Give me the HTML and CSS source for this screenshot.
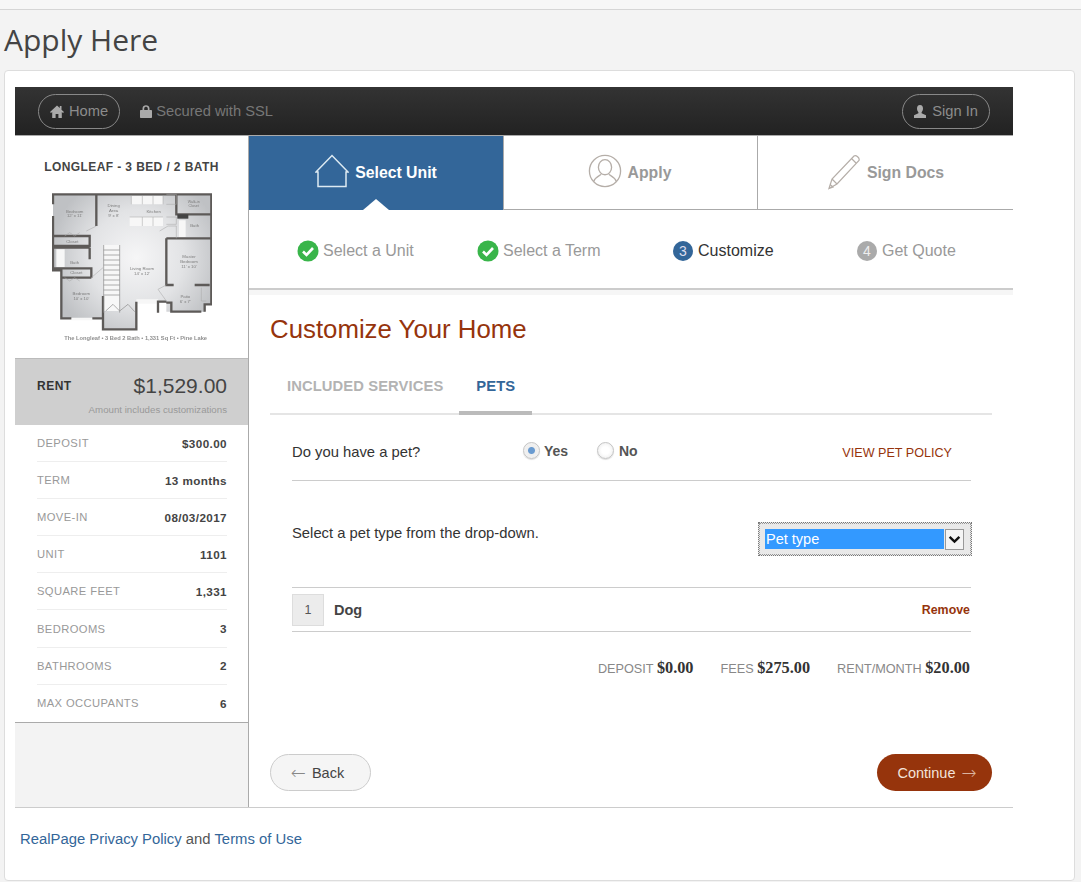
FILE: index.html
```html
<!DOCTYPE html>
<html lang="en">
<head>
<meta charset="utf-8">
<title>Apply Here</title>
<link rel="stylesheet" href="styles.css">
</head>
<body>
<div class="topstrip"></div>
<h1 class="page-title">Apply Here</h1>
<div class="card">
  <div class="app">
    <header class="topbar">
      <a class="pill">
        <svg class="ico-home" viewBox="0 0 14 13"><path d="M7 0.5 L0 7 L1 8 L2.2 7 V13 H5.6 V9 H8.4 V13 H11.8 V7 L13 8 L14 7 L11.5 4.7 V1 H9.8 V3.1 Z"/></svg>
        Home
      </a>
      <span class="ssl">
        <svg class="ico-lock" viewBox="0 0 12 13"><path d="M2.5 5 V3.5 C2.5 -0.8 9.5 -0.8 9.5 3.5 V5 H11 C11.6 5 12 5.4 12 6 V12 C12 12.6 11.6 13 11 13 H1 C0.4 13 0 12.6 0 12 V6 C0 5.4 0.4 5 1 5 Z M4.2 5 H7.8 V3.5 C7.8 1.2 4.2 1.2 4.2 3.5 Z" fill-rule="evenodd"/></svg>
        Secured with SSL
      </span>
      <a class="pill signin">
        <svg class="ico-user" viewBox="0 0 12 13"><path d="M6 0 C8.2 0 9 1.7 9 3.6 C9 5.3 8.2 6.6 7.6 7.2 V8.3 L12 10.2 V13 H0 V10.2 L4.4 8.3 V7.2 C3.8 6.6 3 5.3 3 3.6 C3 1.7 3.8 0 6 0 Z"/></svg>
        Sign In
      </a>
    </header>
    <div class="columns">
      <aside class="side">
        <h2 class="plan-title">LONGLEAF - 3 BED / 2 BATH</h2>
        <svg class="plan" viewBox="97 36 480 474">
          <defs>
            <radialGradient id="floor" gradientUnits="userSpaceOnUse" cx="350" cy="230" r="260"><stop offset="0" stop-color="#f6f6f7"/><stop offset="0.55" stop-color="#e2e3e5"/><stop offset="1" stop-color="#bfc1c4"/></radialGradient>
          </defs>
          <path class="floor" d="M100 40 H575 V370 H555 V392 H440 V365 H350 V445 H250 V412 H125 V268 H100 Z"/>
          <path class="white" d="M335 45 H430 V70 H335 Z M330 108 H430 V135 H330 Z M252 192 H300 V390 H252 Z M110 205 H135 V258 H110 Z M478 118 H498 V168 H478 Z M350 355 H415 V368 H350 Z M155 410 H218 V418 H155 Z"/>
          <path class="wall" d="M100 70 V40 H575 V370 H555 V392 M545 392 H455 V365 H440 M415 395 V362 H440 M350 362 V445 H250 V412 H218 M155 412 H125 V268 H100 V105 M230 40 V135 M100 165 H210 V195 H100 M210 200 V235 M100 200 H210 M100 262 H215 V290 M125 290 H215 M250 345 V412 M470 40 V100 H575 M440 172 H575 M440 172 V312 H462 M525 312 H570"/>
          <path class="stair" d="M252 192 V395 M300 192 V395 M252 207 H300 M252 222 H300 M252 237 H300 M252 252 H300 M252 267 H300 M252 282 H300 M252 297 H300 M252 312 H300 M252 327 H300 M252 342 H300 M258 390 L280 370 L300 390 L325 370 L345 392"/>
          <path class="thin" d="M230 135 L200 150 M335 45 V70 M368 45 V70 M400 45 V70 M430 45 V70 M330 108 H430 M368 108 V135 M400 108 V135 M440 40 H470 V70 H440 M440 108 H470 V130 H440 M420 150 L445 135 H470 V172 M135 165 L150 155 L165 165 L180 155 M135 290 L150 300 L165 290 L180 300 M215 290 L250 260 M440 312 L415 325 L440 360 M545 320 V360 H560"/>
          <rect class="wall-fill" x="473" y="100" width="33" height="13"/>
          <text class="room" x="165" y="95">Bedroom</text><text class="room" x="165" y="108">12' x 11'</text>
          <text class="room" x="282" y="78">Dining</text><text class="room" x="282" y="93">Area</text><text class="room" x="282" y="107">9' x 8'</text>
          <text class="room" x="402" y="95">Kitchen</text>
          <text class="room small" x="522" y="65">Walk-in</text><text class="room small" x="522" y="78">Closet</text>
          <text class="room" x="525" y="138">Bath</text>
          <text class="room" x="158" y="187">Closet</text>
          <text class="room" x="165" y="248">Bath</text>
          <text class="room" x="170" y="280">Closet</text>
          <text class="room" x="185" y="343">Bedroom</text><text class="room" x="185" y="356">10' x 10'</text>
          <text class="room" x="367" y="268">Living Room</text><text class="room" x="367" y="282">14' x 12'</text>
          <text class="room" x="508" y="232">Master</text><text class="room" x="508" y="247">Bedroom</text><text class="room" x="508" y="261">11' x 10'</text>
          <text class="room" x="497" y="352">Patio</text><text class="room" x="497" y="366">6' x 7'</text>
          <text class="caption" x="348" y="477">The Longleaf • 3 Bed 2 Bath • 1,331 Sq Ft • Pine Lake</text>
        </svg>
        <div class="rent">
          <div class="rent-line"><span class="rent-label">RENT</span><span class="rent-value">$1,529.00</span></div>
          <div class="rent-note">Amount includes customizations</div>
        </div>
        <dl class="facts">
          <div class="fact"><dt>DEPOSIT</dt><dd>$300.00</dd></div>
          <div class="fact"><dt>TERM</dt><dd>13 months</dd></div>
          <div class="fact"><dt>MOVE-IN</dt><dd>08/03/2017</dd></div>
          <div class="fact"><dt>UNIT</dt><dd>1101</dd></div>
          <div class="fact"><dt>SQUARE FEET</dt><dd>1,331</dd></div>
          <div class="fact"><dt>BEDROOMS</dt><dd>3</dd></div>
          <div class="fact"><dt>BATHROOMS</dt><dd>2</dd></div>
          <div class="fact"><dt>MAX OCCUPANTS</dt><dd>6</dd></div>
        </dl>
        <div class="side-fill"></div>
      </aside>
      <main class="main">
        <nav class="tabs">
          <div class="tab active">
            <svg class="ico-house" viewBox="0 0 34 34"><path d="M1 18 L17 1.5 L33 18 H31 V32.5 H3 V18 Z"/></svg>
            <span>Select Unit</span>
          </div>
          <div class="tab person">
            <svg class="ico-person" viewBox="0 0 36 36"><circle cx="18" cy="18" r="16.5"/><ellipse cx="18" cy="14" rx="7" ry="8"/><path d="M6 29 C8 24 12 23 14 21.5 M30 29 C28 24 24 23 22 21.5"/></svg>
            <span>Apply</span>
          </div>
          <div class="tab">
            <svg class="ico-pencil" viewBox="0 0 34 36"><path d="M1 34.5 L4 25 L26 2 C28 0.5 32 4 31 6.5 L9 30 Z M4 25 L9 30 M23.5 4.5 L28.5 9.5 M1 34.5 L2.2 30.5 L5 33 Z"/></svg>
            <span>Sign Docs</span>
          </div>
        </nav>
        <div class="steps">
          <div class="step done"><svg class="check" viewBox="0 0 22 22"><circle cx="11" cy="11" r="10.5"/><path d="M6 11.5 L9.5 15 L16 8"/></svg>Select a Unit</div>
          <div class="step done two"><svg class="check" viewBox="0 0 22 22"><circle cx="11" cy="11" r="10.5"/><path d="M6 11.5 L9.5 15 L16 8"/></svg>Select a Term</div>
          <div class="step current"><span class="num">3</span>Customize</div>
          <div class="step last"><span class="num">4</span>Get Quote</div>
        </div>
        <div class="band"></div>
        <section class="content">
          <h2 class="heading">Customize Your Home</h2>
          <div class="subtabs">
            <span class="subtab">INCLUDED SERVICES</span>
            <span class="subtab on">PETS</span>
          </div>
          <div class="panel">
            <div class="q-row">
              <span class="q-label">Do you have a pet?</span>
              <label class="radio"><span class="dot on"></span>Yes</label>
              <label class="radio"><span class="dot"></span>No</label>
              <a class="policy">VIEW PET POLICY</a>
            </div>
            <div class="type-row">
              <span>Select a pet type from the drop-down.</span>
              <div class="select"><span class="select-val">Pet type</span><span class="select-btn"><svg viewBox="0 0 12 8"><path d="M1.5 1.5 L6 6 L10.5 1.5"/></svg></span></div>
            </div>
            <div class="pet-row">
              <span class="pet-num">1</span>
              <span class="pet-name">Dog</span>
              <a class="remove">Remove</a>
            </div>
            <div class="totals">
              <span class="total">DEPOSIT <b>$0.00</b></span>
              <span class="total">FEES <b>$275.00</b></span>
              <span class="total">RENT/MONTH <b>$20.00</b></span>
            </div>
          </div>
          <div class="actions">
            <a class="btn back"><span class="arrow">←</span> Back</a>
            <a class="btn next">Continue <span class="arrow">→</span></a>
          </div>
        </section>
      </main>
    </div>
    <footer class="foot"><a>RealPage Privacy Policy</a> and <a>Terms of Use</a></footer>
  </div>
</div>
</body>
</html>
```

FILE: styles.css
```css
* { box-sizing: border-box; }
html, body { margin: 0; height: 882px; overflow: hidden; }
body { background: #f3f3f3; font-family: "Liberation Sans", Arial, sans-serif; color: #333; }
.topstrip { height: 10px; background: #f7f7f7; border-bottom: 1px solid #d6d6d6; }
.page-title { margin: 0; height: 60px; padding: 12px 0 0 4px; font: 400 30px/36px "Open Sans", sans-serif; color: #444; }
.card { margin: 0 6px 0 4px; height: 811px; background: #fff; border: 1px solid #ddd; border-radius: 4px; padding: 16px 0 0 10px; }
.app { width: 998px; }

.topbar { height: 49px; background: linear-gradient(#333, #222); border-bottom: 1px solid #aaa; display: flex; align-items: center; padding: 0 23px; color: #777; font-size: 14.7px; }
.pill { display: flex; align-items: center; gap: 5px; height: 35px; padding: 0 11px; border: 1px solid #888; border-radius: 18px; color: #8c8c8c; }
.ico-home { width: 14px; height: 13px; fill: #aaa; }
.ico-lock { width: 12px; height: 13px; fill: #aaa; }
.ico-user { width: 12px; height: 13px; fill: #aaa; }
.ssl { display: flex; align-items: center; gap: 4px; margin-left: 20px; color: #777; }
.signin { margin-left: auto; gap: 6px; }

.columns { display: flex; height: 672px; border-bottom: 1px solid #ccc; }
.side { width: 234px; border-right: 1px solid #aaa; display: flex; flex-direction: column; }
.plan-title { margin: 0; padding-top: 24px; height: 57px; text-align: center; font-size: 12px; line-height: 14px; font-weight: 700; letter-spacing: 0.4px; color: #444; }
.plan { display: block; width: 160px; height: 158px; margin: 0 0 7px 37px; flex: none; filter: blur(0.4px); }
.floor { fill: url(#floor); }
.white { fill: #f7f7f7; }
.wall { fill: none; stroke: #5d5a58; stroke-width: 7; }
.wall-fill { fill: #444; }
.stair { fill: none; stroke: #8a8a8a; stroke-width: 2; }
.thin { fill: none; stroke: #a8a8a8; stroke-width: 1.6; }
.room { font-size: 13px; fill: #7d7d7d; text-anchor: middle; }
.room.small { font-size: 11px; }
.caption { font-size: 17.2px; font-weight: 700; fill: #8f8f8f; text-anchor: middle; }

.rent { height: 67px; background: #cfcfcf; border-top: 1px solid #bbb; padding: 14px 21px 0 22px; flex: none; }
.rent-line { display: flex; justify-content: space-between; align-items: center; height: 26px; }
.rent-label { font-size: 12px; font-weight: 700; letter-spacing: 0.5px; color: #333; }
.rent-value { font-size: 21px; color: #444; }
.rent-note { text-align: right; font-size: 9.7px; line-height: 14px; margin-top: 4px; color: #999; }
.facts { margin: 0; padding: 0 21px 0 22px; border-bottom: 1px solid #aaa; flex: none; }
.fact { display: flex; justify-content: space-between; align-items: center; height: 37.1px; border-bottom: 1px solid #eee; }
.fact:last-child { border-bottom: 0; }
.fact dt { font-size: 11.2px; letter-spacing: 0.4px; color: #999; }
.fact dd { margin: 0; font-size: 11.7px; font-weight: 700; letter-spacing: 0.4px; color: #444; }
.side-fill { flex: 1; background: #f3f3f3; }

.main { width: 764px; display: flex; flex-direction: column; }
.tabs { display: grid; grid-template-columns: 254px 254px 1fr; height: 74px; border-bottom: 1px solid #aaa; flex: none; }
.tab { display: flex; align-items: center; justify-content: center; gap: 6px; font-size: 15.8px; font-weight: 700; color: #999; border-left: 1px solid #aaa; position: relative; }
.tab:first-child { border-left: 0; }
.tab.person { gap: 4px; }
.tab.active { background: #336699; color: #fff; margin-bottom: -1px; }
.tab.active::after { content: ""; position: absolute; left: 50%; bottom: 0; margin-left: -13px; border: 13px solid transparent; border-top: 0; border-bottom-color: #fff; transform: scaleY(0.85); transform-origin: bottom; }
.ico-house { width: 34px; height: 34px; fill: none; stroke: #ddeaf2; stroke-width: 1.5; position: relative; top: -2px; }
.ico-person { width: 34px; height: 34px; fill: none; stroke: #b5aea8; stroke-width: 1.4; position: relative; top: -2px; left: -2px; }
.ico-pencil { width: 34px; height: 36px; fill: none; stroke: #b5aea8; stroke-width: 1.2; position: relative; top: -1px; left: 1px; }

.steps { height: 80px; border-bottom: 2px solid #ccc; display: flex; align-items: center; padding: 3px 0 0 48px; font-size: 16px; color: #999; flex: none; }
.step { display: flex; align-items: center; gap: 4px; width: 180px; flex: none; }
.step.two { width: 196px; }
.step.current { width: 184px; color: #333; }
.step.last { width: 156px; }
.check { width: 22px; height: 22px; flex: none; }
.check circle { fill: #39b54a; }
.check path { fill: none; stroke: #fff; stroke-width: 2.6; }
.num { width: 20px; height: 20px; margin-right: 1px; border-radius: 50%; background: #aaa; color: #eee; text-align: center; font-size: 14px; line-height: 20px; }
.current .num { background: #336699; color: #dde; }
.band { height: 5px; background: #f6f6f6; flex: none; }

.content { flex: 1; padding: 0 21px; display: flex; flex-direction: column; }
.heading { margin: 0; padding-top: 16px; height: 58px; font-size: 25.8px; line-height: 36px; font-weight: 400; color: #96340c; }
.subtabs { display: flex; height: 62px; border-bottom: 2px solid #e5e5e5; flex: none; }
.subtab { height: 60px; padding: 24px 16px 0 17px; font-size: 14.75px; line-height: 18px; font-weight: 700; letter-spacing: 0.1px; color: #b3b3b3; }
.subtab.on { color: #336699; border-bottom: 4px solid #bbb; height: 62px; padding: 24px 17px 0; }
.panel { padding: 0 21px 0 22px; font-size: 14.8px; }
.q-row { display: flex; align-items: center; height: 66px; padding-top: 8px; border-bottom: 1px solid #ccc; }
.q-label { width: 231px; }
.radio { display: flex; align-items: center; gap: 4px; font-size: 14px; font-weight: 700; color: #555; width: 74px; position: relative; top: -1px; }
.radio + .radio { gap: 5px; }
.dot { width: 17px; height: 17px; border-radius: 50%; border: 1px solid #c4c4c4; background: radial-gradient(circle, #fff 35%, #e9e9e9); box-shadow: 0 1px 1px #ddd; }
.dot.on { background: radial-gradient(circle, #6a9bd0 0 3px, #eee 4px, #f4f4f4); }
.policy { margin-left: auto; margin-right: 19px; font-size: 12.6px; color: #96340c; position: relative; top: 1px; }
.type-row { display: flex; justify-content: space-between; height: 107px; padding: 44px 0 0; border-bottom: 1px solid #ccc; }
.select { display: flex; align-items: center; width: 214px; height: 34px; margin: -3px 0 0; padding: 0 7px 0 6px; background: #e9e9e9; border: 1px dotted #777; outline: 1px dotted #999; outline-offset: -2px; gap: 1px; position: relative; left: 1px; }
.select-val { flex: 1; height: 20px; background: #3399ff; color: #fff; font-size: 14.5px; line-height: 20px; padding-left: 1px; }
.select-btn { width: 19px; height: 21px; background: #f5f5f5; border: 1px solid #999; display: flex; align-items: center; justify-content: center; }
.select-btn svg { width: 13px; height: 9px; fill: none; stroke: #111; stroke-width: 2.2; }
.pet-row { display: flex; align-items: center; height: 44px; border-bottom: 1px solid #ccc; padding-top: 1px; }
.pet-num { width: 32px; height: 32px; background: #ececec; border: 1px solid #ddd; text-align: center; font-size: 12.5px; line-height: 30px; color: #555; }
.pet-name { margin-left: 10px; font-weight: 700; color: #444; font-size: 14.5px; }
.remove { margin-left: auto; margin-right: 1px; font-size: 12.4px; font-weight: 700; color: #96340c; }
.totals { display: flex; justify-content: flex-end; gap: 27px; padding: 26px 1px 0 0; font-size: 12.7px; color: #888; }
.total b { font-family: "Liberation Serif", serif; font-size: 16.3px; color: #333; }
.actions { display: flex; justify-content: space-between; margin-top: 76px; }
.btn { display: flex; align-items: center; justify-content: center; height: 37px; border-radius: 19px; font-size: 14.5px; gap: 6px; }
.back { width: 101px; padding-right: 6px; background: #f5f5f5; border: 1px solid #ccc; color: #444; }
.next { width: 115px; padding-left: 5px; background: #96340c; color: #f3e3da; }
.arrow { font-family: "DejaVu Sans", sans-serif; font-weight: 200; color: #888; font-size: 18px; line-height: 18px; }
.next .arrow { color: #dbb39f; }
.foot { padding: 21px 0 0 5px; font-size: 14.85px; line-height: 20px; color: #555; }
.foot a { color: #336699; }
```
